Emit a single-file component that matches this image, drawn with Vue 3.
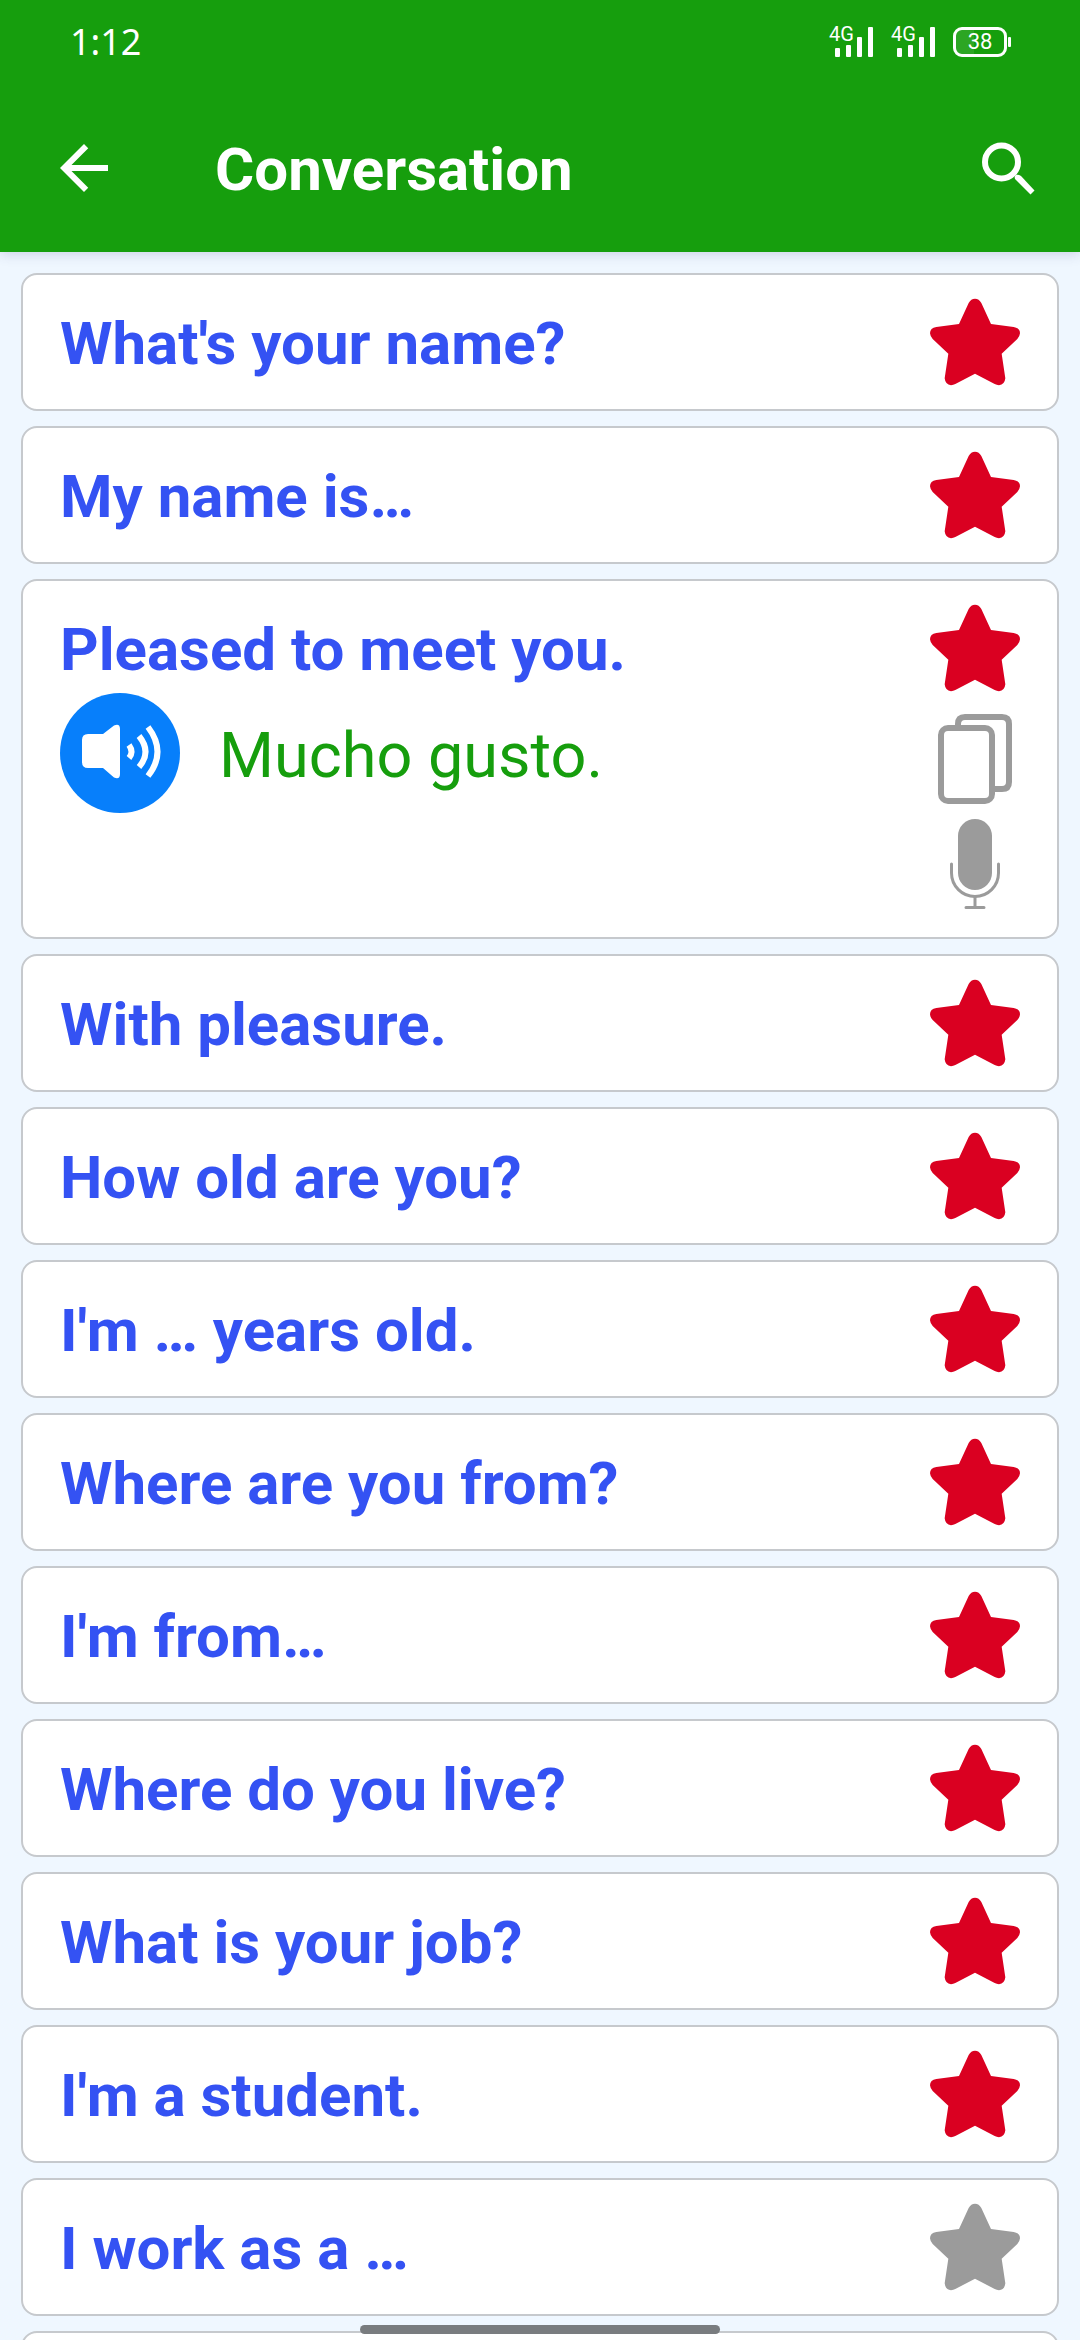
<template>
  <div class="screen">
    <header class="header">
      <div class="status-bar">
        <span class="clock">1:12</span>
        <div class="status-icons">
          <div v-for="n in 2" :key="n" class="signal">
            <span class="network">4G</span>
            <svg class="bars" viewBox="0 0 38 30" aria-hidden="true">
              <rect x="0" y="21" width="5" height="9" rx="1" />
              <rect x="11" y="18" width="5" height="12" rx="1" />
              <rect x="22" y="10" width="5" height="20" rx="1" />
              <rect x="33" y="0" width="5" height="30" rx="1" />
            </svg>
          </div>
          <div class="battery">
            <span class="battery-level">38</span>
          </div>
        </div>
      </div>

      <div class="toolbar">
        <button aria-label="Back">
          <svg class="back-icon" viewBox="4 4 16 16" aria-hidden="true">
            <path d="M20 11H7.83l5.59-5.59L12 4l-8 8 8 8 1.41-1.41L7.83 13H20v-2z" />
          </svg>
        </button>
        <h1 class="title">Conversation</h1>
        <button aria-label="Search">
          <svg class="search-icon" viewBox="0 0 53 53" aria-hidden="true">
            <circle cx="19.500" cy="20" r="16.500" fill="none" stroke="#fff" stroke-width="6" />
            <path d="M33 37 Q32 34 34 33 Q36 32 39 34 L52.500 48.500 L48.500 52.500 Z" />
          </svg>
        </button>
      </div>
    </header>

    <ul class="phrases">
      <li v-for="phrase in phrases" :key="phrase.text" class="card">
        <div class="row">
          <button class="phrase" @click="toggleOpen(phrase)">{{ phrase.text }}</button>
          <button
            class="star"
            :class="{ active: phrase.starred }"
            :aria-pressed="phrase.starred"
            aria-label="Favorite"
            @click="phrase.starred = !phrase.starred"
          >
            <svg viewBox="0 0 270 270" aria-hidden="true">
              <path d="M135 5Q147 5 154 18L183 81L251 90Q270 93 270 109Q269 119 262 126L215 170L226 244Q224 263 207 265Q200 264 194 261L135 230L76 261Q70 264 63 265Q46 263 44 244L55 170L8 126Q1 119 0 109Q0 93 19 90L87 81L116 18Q123 5 135 5Z" />
            </svg>
          </button>
        </div>

        <div v-if="phrase.open" class="details">
          <button class="speaker" aria-label="Listen">
            <svg viewBox="0 0 120 120" aria-hidden="true">
              <circle cx="60" cy="60" r="60" fill="#077ffb" />
              <path d="M28 41H43L54 32.500Q60 30 60 36V81Q60 87 54 84.500L43 75H28Q22 75 22 69V47Q22 41 28 41Z" fill="#fff" />
              <g fill="none" stroke="#fff" stroke-width="6">
                <path d="M69 52Q74 59 69 65" />
                <path d="M79 43Q92 59 79 74" />
                <path d="M88 34Q107 59 88 83" />
              </g>
            </svg>
          </button>
          <p class="translation">{{ phrase.translation }}</p>
          <div class="actions">
            <button aria-label="Copy">
              <svg viewBox="0 0 90 90" aria-hidden="true">
                <g fill="none" stroke="#9b9b9b" stroke-width="6">
                  <rect x="11" y="14" width="51" height="73" rx="7" />
                  <path d="M28 11V10Q28 3 35 3H72Q79 3 79 10V68Q79 75 72 75H63" />
                </g>
              </svg>
            </button>
            <button aria-label="Record">
              <svg viewBox="0 0 90 90" aria-hidden="true">
                <rect x="28" y="0" width="34" height="71" rx="17" fill="#9b9b9b" />
                <g fill="none" stroke="#9b9b9b" stroke-width="3" stroke-linecap="round">
                  <path d="M21.500 45V54A23.500 23.500 0 0 0 68.500 54V45" />
                  <path d="M45 78V88M36 88.500H54" />
                </g>
              </svg>
            </button>
          </div>
        </div>
      </li>
    </ul>

    <div class="home-bar"></div>
  </div>
</template>

<script setup>
import { ref } from 'vue'

const phrases = ref([
  { text: "What's your name?", translation: '¿Cómo te llamas?', starred: true, open: false },
  { text: 'My name is…', translation: 'Me llamo…', starred: true, open: false },
  { text: 'Pleased to meet you.', translation: 'Mucho gusto.', starred: true, open: true },
  { text: 'With pleasure.', translation: 'Con gusto.', starred: true, open: false },
  { text: 'How old are you?', translation: '¿Cuántos años tienes?', starred: true, open: false },
  { text: "I'm … years old.", translation: 'Tengo … años.', starred: true, open: false },
  { text: 'Where are you from?', translation: '¿De dónde eres?', starred: true, open: false },
  { text: "I'm from…", translation: 'Soy de…', starred: true, open: false },
  { text: 'Where do you live?', translation: '¿Dónde vives?', starred: true, open: false },
  { text: 'What is your job?', translation: '¿En qué trabajas?', starred: true, open: false },
  { text: "I'm a student.", translation: 'Soy estudiante.', starred: true, open: false },
  { text: 'I work as a …', translation: 'Trabajo como …', starred: false, open: false },
  { text: 'See you later.', translation: 'Hasta luego.', starred: false, open: false }
])

const toggleOpen = (phrase) => {
  phrase.open = !phrase.open
}
</script>

<style>
body {
  margin: 0;
  background-color: #eff7ff;
}
</style>

<style scoped>
.screen {
  display: flex;
  flex-direction: column;
  height: 100vh;
  overflow: hidden;
  background-color: #eff7ff;
  font-family: Roboto, "Liberation Sans", sans-serif;
}

button {
  margin: 0;
  padding: 0;
  border: none;
  background: none;
  font: inherit;
  cursor: pointer;
}

svg {
  display: block;
}

.header {
  flex: none;
  background-color: #169e0d;
  color: white;
  box-shadow: 0 2px 12px rgba(60, 60, 120, 0.2);
  z-index: 1;
}

.status-bar {
  display: flex;
  justify-content: space-between;
  align-items: center;
  height: 84px;
  padding: 0 69px 0 70px;
}

.clock {
  font-family: "Noto Sans", sans-serif;
  font-size: 36px;
  line-height: 48px;
}

.status-icons {
  display: flex;
  align-items: center;
  gap: 18px;
}

.signal {
  position: relative;
  padding-left: 6px;
}

.network {
  position: absolute;
  left: 0;
  top: 0;
  font-size: 20px;
  line-height: 14px;
}

.bars {
  width: 38px;
  height: 30px;
  fill: white;
}

.battery {
  position: relative;
  box-sizing: border-box;
  width: 54px;
  height: 30px;
  margin-right: 4px;
  border: 3px solid white;
  border-radius: 9px;
  background: linear-gradient(to right, #2ca624 38%, transparent 38%);
  text-align: center;
}

.battery::after {
  content: "";
  position: absolute;
  right: -7px;
  top: 7px;
  width: 3px;
  height: 10px;
  border-radius: 1px;
  background-color: white;
}

.battery-level {
  display: block;
  font-size: 22px;
  line-height: 24px;
}

.toolbar {
  display: flex;
  align-items: center;
  height: 168px;
  padding: 0 45px 0 60px;
}

.back-icon {
  width: 48px;
  height: 48px;
  fill: white;
}

.search-icon {
  width: 53px;
  height: 53px;
  fill: white;
}

.title {
  flex: 1;
  margin: 0;
  padding: 4px 0 0 107px;
  font-size: 60px;
  font-weight: 700;
  line-height: 72px;
}

.phrases {
  flex: 1;
  display: flex;
  flex-direction: column;
  gap: 15px;
  min-height: 0;
  margin: 0;
  padding: 21px;
  overflow-y: auto;
  scrollbar-width: none;
  list-style: none;
}

.card {
  flex: none;
  padding: 22px 37px;
  border: 2px solid #c6c9cd;
  border-radius: 16px;
  background-color: white;
}

.row {
  display: flex;
  align-items: center;
}

.phrase {
  flex: 1;
  padding-top: 4px;
  color: #3452f3;
  font-size: 60px;
  font-weight: 700;
  line-height: 72px;
  text-align: left;
}

.star {
  width: 90px;
  height: 90px;
  fill: #9b9b9b;
}

.star.active {
  fill: #da0021;
}

.details {
  display: flex;
  align-items: flex-start;
  padding-bottom: 6px;
}

.speaker {
  width: 120px;
  height: 120px;
}

.translation {
  flex: 1;
  margin: 0;
  padding: 3px 0 0 39px;
  color: #169e0d;
  font-size: 63px;
  line-height: 120px;
}

.actions {
  display: flex;
  flex-direction: column;
  gap: 15px;
  padding-top: 21px;
}

.actions button {
  width: 90px;
  height: 90px;
}

.home-bar {
  position: fixed;
  bottom: 6px;
  left: 50%;
  width: 33.333%;
  height: 9px;
  border-radius: 5px;
  background-color: #797c7f;
  transform: translateX(-50%);
  z-index: 2;
}
</style>
